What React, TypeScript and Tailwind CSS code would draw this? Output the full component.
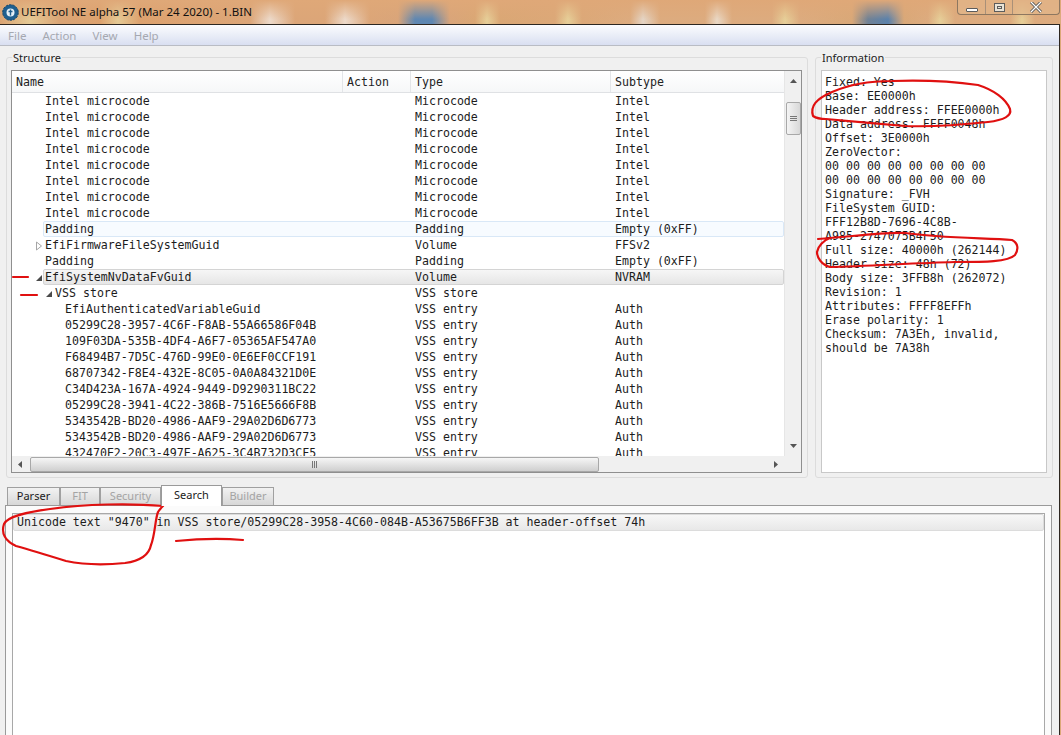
import React from "react";

const mono = "font-['DejaVu_Sans_Mono','Liberation_Mono',monospace] text-[11.6px]";
const ui = "font-['Noto_Sans','Open_Sans',sans-serif]";

type Row = {
  name: string;
  type: string;
  sub: string;
  indent: number;
  arrow?: "open" | "closed";
  box?: "hover" | "select";
};

const micro: Row = { name: "Intel microcode", type: "Microcode", sub: "Intel", indent: 0 };
const entry = (name: string, sub = "Auth"): Row => ({ name, type: "VSS entry", sub, indent: 2 });

const rows: Row[] = [
  micro, micro, micro, micro, micro, micro, micro, micro,
  { name: "Padding", type: "Padding", sub: "Empty (0xFF)", indent: 0, box: "hover" },
  { name: "EfiFirmwareFileSystemGuid", type: "Volume", sub: "FFSv2", indent: 0, arrow: "closed" },
  { name: "Padding", type: "Padding", sub: "Empty (0xFF)", indent: 0 },
  { name: "EfiSystemNvDataFvGuid", type: "Volume", sub: "NVRAM", indent: 0, arrow: "open", box: "select" },
  { name: "VSS store", type: "VSS store", sub: "", indent: 1, arrow: "open" },
  entry("EfiAuthenticatedVariableGuid"),
  entry("05299C28-3957-4C6F-F8AB-55A66586F04B"),
  entry("109F03DA-535B-4DF4-A6F7-05365AF547A0"),
  entry("F68494B7-7D5C-476D-99E0-0E6EF0CCF191"),
  entry("68707342-F8E4-432E-8C05-0A0A84321D0E"),
  entry("C34D423A-167A-4924-9449-D9290311BC22"),
  entry("05299C28-3941-4C22-386B-7516E5666F8B"),
  entry("5343542B-BD20-4986-AAF9-29A02D6D6773"),
  entry("5343542B-BD20-4986-AAF9-29A02D6D6773"),
  entry("432470E2-20C3-497E-A625-3C4B732D3CF5"),
];

const info = [
  "Fixed: Yes",
  "Base: EE0000h",
  "Header address: FFEE0000h",
  "Data address: FFFF0048h",
  "Offset: 3E0000h",
  "ZeroVector:",
  "00 00 00 00 00 00 00 00",
  "00 00 00 00 00 00 00 00",
  "Signature: _FVH",
  "FileSystem GUID:",
  "FFF12B8D-7696-4C8B-",
  "A985-2747075B4F50",
  "Full size: 40000h (262144)",
  "Header size: 48h (72)",
  "Body size: 3FFB8h (262072)",
  "Revision: 1",
  "Attributes: FFFF8EFFh",
  "Erase polarity: 1",
  "Checksum: 7A3Eh, invalid,",
  "should be 7A38h",
];

const Arrow = ({ kind }: { kind: "open" | "closed" }) =>
  kind === "open" ? (
    <svg width="8" height="8" viewBox="0 0 8 8" className="shrink-0">
      <path d="M7 1V7H1Z" fill="#4a4a4a" />
    </svg>
  ) : (
    <svg width="8" height="10" viewBox="0 0 8 10" className="shrink-0">
      <path d="M1.5 1L6.5 5L1.5 9Z" fill="#fff" stroke="#a6a6a6" />
    </svg>
  );

function TreeRow({ row }: { row: Row }) {
  const left = 45 + row.indent * 10;
  return (
    <div className="relative flex h-4 shrink-0 items-center pt-px text-[#1c1c1c]">
      {row.box && (
        <div
          className={
            row.box === "hover"
              ? "absolute inset-y-0 right-0 left-[31px] rounded-[2px] border border-[#d9e8f7] bg-[#f7fbff]"
              : "absolute inset-y-0 right-0 left-[31px] rounded-[2px] border border-[#d4d4d4] bg-gradient-to-b from-[#f6f6f6] to-[#e6e6e6]"
          }
        />
      )}
      <div className="relative flex w-[331px] shrink-0 items-center" style={{ paddingLeft: left - 12 - (row.arrow ? 10 : 0) }}>
        {row.arrow && (
          <span className="flex w-[10px] items-center">
            <Arrow kind={row.arrow} />
          </span>
        )}
        <span className="whitespace-pre">{row.name}</span>
      </div>
      <div className="w-[68px] shrink-0" />
      <div className="relative w-[200px] shrink-0 pl-[4px]">{row.type}</div>
      <div className="relative pl-[4px]">{row.sub}</div>
    </div>
  );
}

const HeaderCell = ({ label, width }: { label: string; width: string }) => (
  <div className={`${width} flex h-full shrink-0 items-center border-r border-[#e3e5e8] pt-[2px] pl-[4px]`}>{label}</div>
);

function VScroll() {
  return (
    <div className="flex w-[17px] shrink-0 flex-col items-center border-l border-[#e6e6e6] bg-[#f0f0f0]">
      <svg width="9" height="6" viewBox="0 0 9 6" className="mt-[7px]">
        <path d="M4.5 1L8 5H1Z" fill="#555" />
      </svg>
      <div className="mt-[18px] flex h-[33px] w-[15px] flex-col items-center justify-center gap-[1px] rounded-[2px] border border-[#a8a8a8] bg-gradient-to-r from-[#f4f4f4] to-[#d8d8d8]">
        <span className="h-px w-[7px] bg-[#777]" />
        <span className="h-px w-[7px] bg-[#777]" />
        <span className="h-px w-[7px] bg-[#777]" />
      </div>
      <div className="flex-1" />
      <svg width="9" height="6" viewBox="0 0 9 6" className="mb-[7px]">
        <path d="M4.5 5L8 1H1Z" fill="#555" />
      </svg>
    </div>
  );
}

function HScroll() {
  return (
    <div className="flex h-[16px] shrink-0 items-center bg-[#f0f0f0]">
      <svg width="6" height="9" viewBox="0 0 6 9" className="ml-[5px]">
        <path d="M1 4.5L5 1V8Z" fill="#555" />
      </svg>
      <div className="ml-[7px] flex h-[15px] w-[569px] items-center justify-center gap-[1px] rounded-[2px] border border-[#a8a8a8] bg-gradient-to-b from-[#f6f6f6] to-[#cfcfcf]">
        <span className="h-[7px] w-px bg-[#777]" />
        <span className="h-[7px] w-px bg-[#777]" />
        <span className="h-[7px] w-px bg-[#777]" />
      </div>
      <div className="flex-1" />
      <svg width="6" height="9" viewBox="0 0 6 9" className="mr-[5px]">
        <path d="M5 4.5L1 1V8Z" fill="#555" />
      </svg>
      <div className="h-full w-[17px] bg-[#f0f0f0]" />
    </div>
  );
}

function Group({ title, className, children }: { title: string; className: string; children: React.ReactNode }) {
  return (
    <div className={`${className} h-[421px] shrink-0 rounded-[3px] border border-[#dcdcdc] pr-[5px] pb-[4px] pl-[4px]`}>
      <div className={`${ui} -mt-[8px] mb-[4px] ml-[1px] h-[16px] w-fit bg-[#f0f0f0] px-px text-[11px] leading-[16px] text-[#222]`}>{title}</div>
      {children}
    </div>
  );
}

function Tab({ label, active, width }: { label: string; active?: boolean; width: string }) {
  if (active) {
    return (
      <div className={`${width} z-10 -mb-px flex h-[21px] items-center justify-center border border-b-0 border-[#9a9a9a] bg-white pb-[2px] text-[#1a1a1a]`}>
        {label}
      </div>
    );
  }
  const color = label === "Parser" ? "text-[#1a1a1a]" : "text-[#a4a4a4]";
  return (
    <div className={`${width} ${color} flex h-[18px] items-center justify-center border border-b-0 border-[#a0a0a0] bg-gradient-to-b from-[#f2f2f2] to-[#d8d8d8]`}>
      {label}
    </div>
  );
}

export default function App() {
  return (
    <div className="relative h-[735px] w-[1061px] overflow-hidden bg-[#dca878]">
      {/* title bar, the blurred desktop shows through it */}
      <div className={`${ui} relative flex h-[24px] items-center bg-[linear-gradient(180deg,#dfa878_0%,rgba(223,168,120,0.2)_80%),linear-gradient(90deg,#d9a373_0px,#e6d29c_30px,#d9a373_60px,#dca06c_100px,#e6d29c_118px,#dca06c_140px,#dba578_250px,#f0e6de_270px,#dba578_295px,#dba578_325px,#f0e6de_345px,#dba578_370px,#d8a47a_398px,#3f7fc0_415px,#3f7fc0_432px,#d8a47a_450px,#d9a774_475px,#e8d8a0_487px,#d9a774_500px,#dba878_555px,#e8d8a0_568px,#dba878_582px,#dcac80_630px,#e6e0d8_643px,#dcac80_660px,#dcac80_705px,#ece4d8_717px,#dcac80_732px,#dcac80_772px,#e8d8a0_785px,#dcac80_800px,#d8a878_852px,#55789c_868px,#3a78b8_888px,#d8a878_904px,#dcac80_928px,#e8d8a0_940px,#dcac80_955px,#dcac80_1010px,#e8d8a0_1022px,#dcac80_1035px)] pl-[2px] text-[11.5px] text-[#111]`}>
        <svg width="17" height="17" viewBox="0 0 17 17" className="mr-[2px] shrink-0">
          <circle cx="8.5" cy="8.5" r="7.8" fill="#1f5f8f" stroke="#15466b" strokeDasharray="2.5 1" />
          <circle cx="8.5" cy="8.5" r="4" fill="#e6f0f7" />
          <path d="M8.5 5.5V11.5M6.5 7.5H10.5" stroke="#1f5f8f" strokeWidth="1.4" />
        </svg>
        <span>UEFITool NE alpha 57 (Mar 24 2020) - 1.BIN</span>
        <div className="absolute top-0 right-[1px] flex h-[15px] w-[103px] overflow-hidden rounded-b-[4px] border border-t-0 border-[#8d7760] bg-[#e3b98e]/60">
          <div className="flex w-[28px] items-center justify-center border-r border-[#a99078]">
            <span className="mt-[5px] h-[4px] w-[12px] rounded-[1px] border border-[#5c5c5c] bg-white" />
          </div>
          <div className="flex w-[27px] items-center justify-center border-r border-[#a99078]">
            <span className="flex h-[9px] w-[11px] items-center justify-center border border-[#5c5c5c] bg-[#e9e3d6]">
              <span className="h-[3px] w-[5px] border border-[#5c5c5c]" />
            </span>
          </div>
          <div className="flex flex-1 items-center justify-center">
            <svg width="14" height="11" viewBox="0 0 14 11">
              <path d="M2 0L12 10M12 0L2 10" stroke="#5a5a5a" strokeWidth="3" />
              <path d="M2 0L12 10M12 0L2 10" stroke="#fff" strokeWidth="1.2" />
            </svg>
          </div>
        </div>
      </div>

      {/* window */}
      <div className="mr-px h-[711px] border-t border-r border-[#2c2620] bg-[#f0f0f0]">
        <div className={`${ui} flex h-[21px] items-center gap-[16px] border-b border-[#b9bcc4] bg-gradient-to-b from-[#fbfcfe] to-[#d9dff1] pt-px pl-[8px] text-[11.5px] text-[#a5a8b0]`}>
          <span>File</span>
          <span>Action</span>
          <span>View</span>
          <span>Help</span>
        </div>

        <div className="mt-[11px] flex gap-[7px] pl-[6px]">
          <Group title="Structure" className="w-[802px]">
            <div className={`${mono} flex h-[403px] flex-col border border-[#8f8f8f] bg-white`}>
              <div className="flex min-h-0 flex-1">
                <div className="flex min-w-0 flex-1 flex-col overflow-hidden">
                  <div className="flex h-[22px] shrink-0 items-center border-b border-[#dfe1e4] bg-gradient-to-b from-white to-[#f6f7f8] text-[#222]">
                    <HeaderCell label="Name" width="w-[331px]" />
                    <HeaderCell label="Action" width="w-[68px]" />
                    <HeaderCell label="Type" width="w-[200px]" />
                    <div className="pt-[2px] pl-[4px]">Subtype</div>
                  </div>
                  {rows.map((row, i) => (
                    <TreeRow key={i} row={row} />
                  ))}
                </div>
                <VScroll />
              </div>
              <HScroll />
            </div>
          </Group>
          <Group title="Information" className="w-[238px]">
            <div className={`${mono} ml-px h-[403px] overflow-hidden border border-[#c8c8c8] bg-white pt-[4px] pl-[3px] leading-[14px] text-[#1c1c1c]`}>
              {info.map((line, i) => (
                <div key={i} className="whitespace-pre">{line}</div>
              ))}
            </div>
          </Group>
        </div>

        {/* bottom tabs */}
        <div className={`${ui} mt-[5px] flex h-[22px] items-end pl-[7px] text-[11px]`}>
          <Tab label="Parser" width="w-[53px]" />
          <Tab label="FIT" width="w-[40px]" />
          <Tab label="Security" width="w-[61px]" />
          <Tab label="Search" active width="w-[61px]" />
          <Tab label="Builder" width="w-[52px]" />
        </div>
        <div className="ml-[5px] h-[232px] w-[1047px] border border-[#9a9a9a] bg-[#fbfbfb] pt-[7px] pl-[6px]">
          <div className={`${mono} h-full w-[1033px] border border-[#a8a8a8] bg-white text-[#1c1c1c]`}>
            <div className="flex h-[17px] items-center rounded-[2px] border border-[#dcdcdc] bg-gradient-to-b from-[#f7f7f7] to-[#e8e8e8] pl-[3px]">
              Unicode text "9470" in VSS store/05299C28-3958-4C60-084B-A53675B6FF3B at header-offset 74h
            </div>
          </div>
        </div>
      </div>

      {/* red pen marks drawn over the screenshot */}
      <svg width="1061" height="735" viewBox="0 0 1061 735" className="pointer-events-none absolute top-0 left-0" fill="none" stroke="#e01010" strokeWidth="2.2" strokeLinecap="round" strokeLinejoin="round">
        <path d="M813 116C810 106 816 99 832 92C848 85 866 81 892 81C920 80 950 81 978 85C994 90 1006 99 1010 109C1012 116 1004 120 988 122C960 125 930 127 905 126C880 124 850 121 826 119C820 119 816 118 813 116Z" />
        <path d="M818 239C850 237 880 232 905 233C940 238 985 238 1012 240C1018 243 1019 249 1015 255C1008 262 985 262 955 262C915 263 870 266 830 267C822 265 817 258 817 252C818 246 824 240 830 238" />
        <path d="M163 506C130 503 85 504 50 509C28 512 8 516 4 524C1 533 5 541 16 546C34 551 50 556 66 561C85 565 105 565 125 563C140 561 149 555 151 545C155 535 155 520 158 512C160 509 162 507 163 506Z" />
        <path d="M176 541C195 539 222 538 243 540" />
        <path d="M13 277H28" />
        <path d="M21 295H37" />
      </svg>
    </div>
  );
}
